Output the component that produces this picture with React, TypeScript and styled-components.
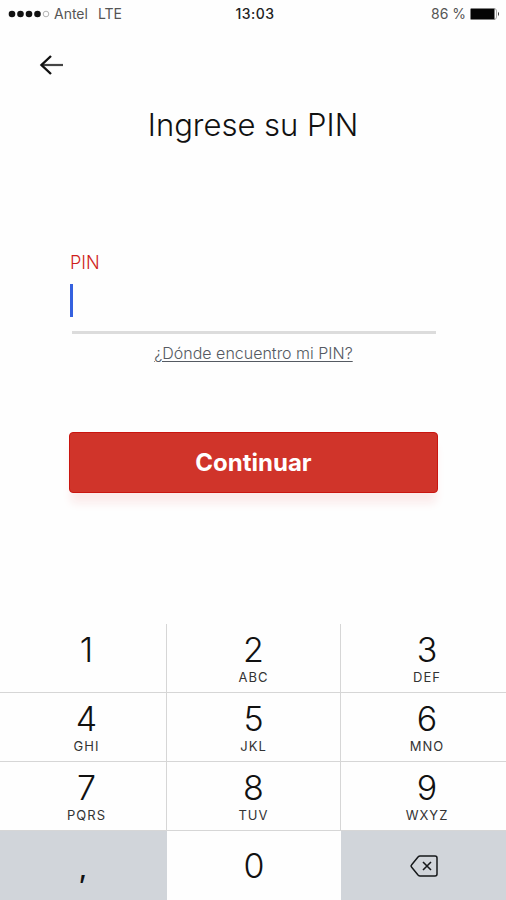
import React from "react";
import styled, { createGlobalStyle } from "styled-components";

const GlobalStyle = createGlobalStyle`
  *, *::before, *::after { box-sizing: border-box; }
  body {
    margin: 0;
    background: #fefefe;
    color: #111;
    font-family: Inter, "Liberation Sans", sans-serif;
  }
  button, input { font: inherit; color: inherit; }
`;

const Screen = styled.div`
  display: flex;
  flex-direction: column;
  min-height: 100vh;
`;

const StatusBar = styled.header`
  display: grid;
  grid-template-columns: 1fr auto 1fr;
  align-items: center;
  height: 27px;
  padding: 0 6px 0 8px;
  font-size: 14px;
  line-height: 20px;
  color: #555;
`;

const StatusGroup = styled.div<{ $end?: boolean }>`
  display: flex;
  align-items: center;
  justify-content: ${(p) => (p.$end ? "flex-end" : "flex-start")};
  gap: 4px;
`;

const Network = styled.span`
  margin-left: 6px;
`;

const Clock = styled.time`
  padding-left: 2px;
  font-weight: 500;
  color: #222;
  letter-spacing: 0.5px;
`;

const BackButton = styled.button`
  display: flex;
  align-self: flex-start;
  margin: 21px 0 0 34px;
  padding: 4px;
  border: 0;
  background: none;
`;

const Title = styled.h1`
  margin: 24px 0 0;
  font-size: 31px;
  line-height: 38px;
  font-weight: 300;
  text-align: center;
`;

const Form = styled.form`
  display: flex;
  flex-direction: column;
  margin: 107px 68px 0 69px;
`;

const Label = styled.label`
  padding-left: 1px;
  font-size: 18px;
  line-height: 24px;
  font-weight: 300;
  color: #cf1f1c;
`;

const Field = styled.div`
  position: relative;
  margin: 0 2px 0 3px;
  border-bottom: 3px solid #dcdcdc;
`;

const PinInput = styled.input`
  display: block;
  width: 100%;
  height: 56px;
  padding: 0 6px;
  border: 0;
  outline: 0;
  background: transparent;
  font-size: 26px;
  caret-color: transparent;
`;

const Caret = styled.span`
  position: absolute;
  left: -2px;
  top: 9px;
  width: 3px;
  height: 33px;
  background: #3561df;
`;

const HelpLink = styled.a`
  align-self: center;
  margin-top: 8px;
  font-size: 16px;
  line-height: 22px;
  font-weight: 300;
  color: #555a62;
  text-decoration: underline;
  text-underline-offset: 2px;
`;

const SubmitButton = styled.button`
  height: 61px;
  margin-top: 68px;
  border: 1px solid #c9150f;
  border-radius: 4px;
  background: #d0342a;
  box-shadow: 0 12px 10px -2px #fbeaea;
  color: #fff;
  font-size: 24px;
  font-weight: 700;
`;

const Keypad = styled.div`
  display: grid;
  grid-template-columns: 167fr 174fr 165fr;
  grid-auto-rows: 69px;
  margin-top: auto;
`;

const Key = styled.button<{ $side?: boolean; $gray?: boolean; $divided?: boolean; $last?: boolean }>`
  display: flex;
  flex-direction: column;
  align-items: center;
  justify-content: ${(p) => (p.$last ? "center" : "flex-start")};
  padding: ${(p) => (p.$last ? "0" : "6px")} 0 0 ${(p) => (p.$side ? "7px" : "0")};
  border: 0 solid ${(p) => (p.$gray ? "#d1d5da" : "#d6d6d6")};
  border-right-width: ${(p) => (p.$divided ? "1px" : "0")};
  border-bottom-width: ${(p) => (p.$last ? "0" : "1px")};
  background: ${(p) => (p.$gray ? "#d1d5da" : "#fefefe")};
`;

const Digit = styled.span`
  font-size: 34px;
  line-height: 40px;
  font-weight: 300;
`;

const Comma = styled.span`
  padding-top: 4px;
  font-size: 28px;
  line-height: 32px;
  font-weight: 500;
`;

const Letters = styled.span`
  font-size: 13px;
  line-height: 14px;
  letter-spacing: 1px;
  color: #333;
`;

const keys = [
  ["1", ""], ["2", "ABC"], ["3", "DEF"],
  ["4", "GHI"], ["5", "JKL"], ["6", "MNO"],
  ["7", "PQRS"], ["8", "TUV"], ["9", "WXYZ"],
];

const SignalDots = () => (
  <svg width="42" height="10" viewBox="0 0 42 10" aria-hidden="true">
    {[4, 12.5, 21, 29.5].map((x) => (
      <circle key={x} cx={x} cy="5" r="3.3" fill="#111" />
    ))}
    <circle cx="38" cy="5" r="2.8" fill="none" stroke="#aaa" strokeWidth="0.9" />
  </svg>
);

const Battery = () => (
  <svg width="30" height="12" viewBox="0 0 30 12" aria-hidden="true">
    <path d="M24 0.5Q26.5 0.5 26.5 3V9Q26.5 11.5 24 11.5" fill="none" stroke="#aaa" />
    <rect x="0.5" y="0.5" width="24" height="11" rx="0.5" fill="#050505" />
    <path d="M28 3.8Q30 6 28 8.2Z" fill="#333" />
  </svg>
);

const BackArrow = () => (
  <svg width="26" height="26" viewBox="0 0 26 26" fill="none" aria-hidden="true">
    <path d="M3 13H25" stroke="#444" strokeWidth="2.2" />
    <path d="M13 4L3.5 13L13 22" stroke="#111" strokeWidth="2.4" />
  </svg>
);

const DeleteIcon = () => (
  <svg width="30" height="24" viewBox="0 0 30 24" fill="none" stroke="#16181a" aria-hidden="true">
    <path d="M11 2H26Q28 2 28 4V20Q28 22 26 22H11Q10 22 9 21L2.5 13Q1.5 12 2.5 11L9 3Q10 2 11 2Z" strokeWidth="1.5" />
    <path d="M14 8L22 16M22 8L14 16" strokeWidth="1.6" />
  </svg>
);

export default function App() {
  return (
    <Screen>
      <GlobalStyle />
      <StatusBar>
        <StatusGroup>
          <SignalDots />
          <span>Antel</span>
          <Network>LTE</Network>
        </StatusGroup>
        <Clock>13:03</Clock>
        <StatusGroup $end>
          <span>86 %</span>
          <Battery />
        </StatusGroup>
      </StatusBar>
      <BackButton type="button" aria-label="Volver">
        <BackArrow />
      </BackButton>
      <Title>Ingrese su PIN</Title>
      <Form onSubmit={(e) => e.preventDefault()}>
        <Label htmlFor="pin">PIN</Label>
        <Field>
          <PinInput id="pin" type="password" inputMode="numeric" autoComplete="off" />
          <Caret />
        </Field>
        <HelpLink href="#ayuda">¿Dónde encuentro mi PIN?</HelpLink>
        <SubmitButton type="submit">Continuar</SubmitButton>
      </Form>
      <Keypad>
        {keys.map(([digit, letters], i) => (
          <Key key={digit} type="button" $side={i % 3 !== 1} $divided={i % 3 !== 2}>
            <Digit>{digit}</Digit>
            {letters && <Letters>{letters}</Letters>}
          </Key>
        ))}
        <Key type="button" $gray $divided $last>
          <Comma>,</Comma>
        </Key>
        <Key type="button" $last>
          <Digit>0</Digit>
        </Key>
        <Key type="button" aria-label="Borrar" $gray $last>
          <DeleteIcon />
        </Key>
      </Keypad>
    </Screen>
  );
}
